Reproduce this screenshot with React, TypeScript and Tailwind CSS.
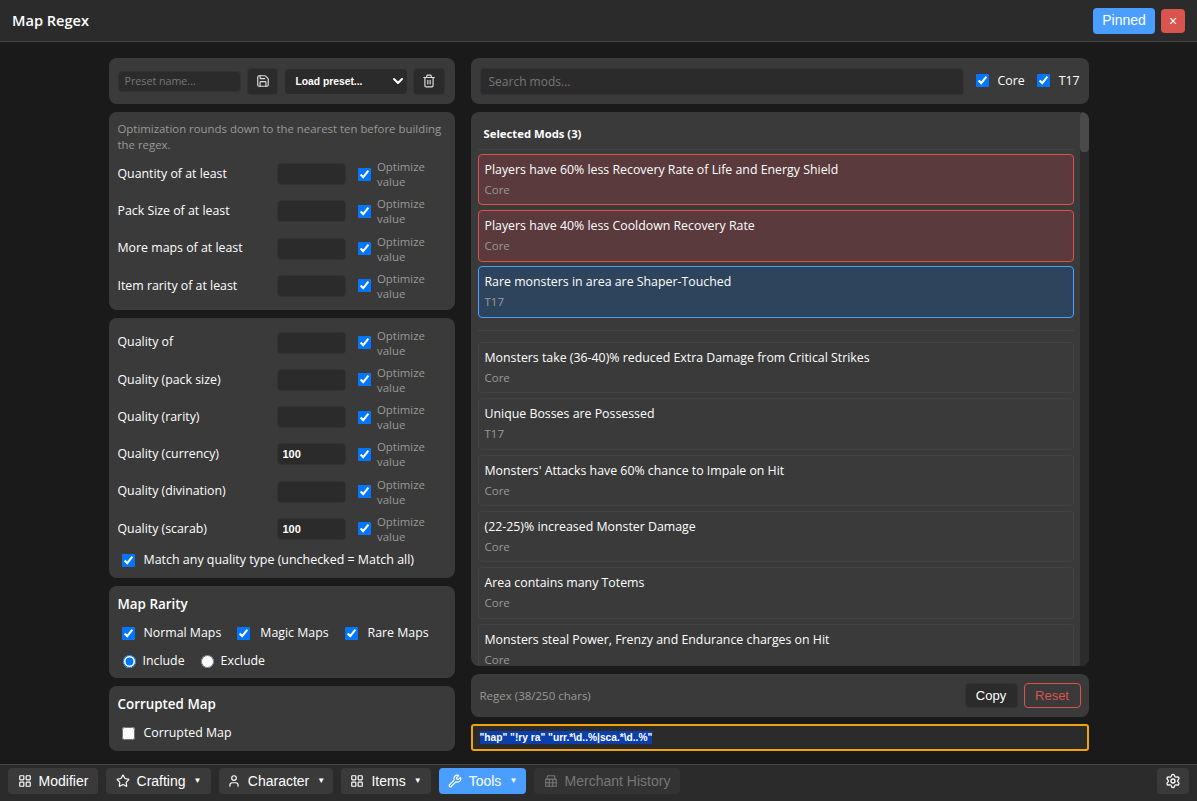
import { ChevronDown, LayoutGrid, Save, Settings, Star, Trash2, User, Wrench } from "lucide-react";

const goals = ["Quantity of at least", "Pack Size of at least", "More maps of at least", "Item rarity of at least"];

const qualities = [
  { label: "Quality of", value: "" },
  { label: "Quality (pack size)", value: "" },
  { label: "Quality (rarity)", value: "" },
  { label: "Quality (currency)", value: "100" },
  { label: "Quality (divination)", value: "" },
  { label: "Quality (scarab)", value: "100" },
];

const selectedMods = [
  { text: "Players have 60% less Recovery Rate of Life and Energy Shield", tag: "Core", tone: "border-[#d9534f] bg-[#5a3a3c]" },
  { text: "Players have 40% less Cooldown Recovery Rate", tag: "Core", tone: "border-[#d9534f] bg-[#5a3a3c]" },
  { text: "Rare monsters in area are Shaper-Touched", tag: "T17", tone: "border-[#4a9eff] bg-[#2e445c]" },
];

const mods = [
  { text: "Monsters take (36-40)% reduced Extra Damage from Critical Strikes", tag: "Core" },
  { text: "Unique Bosses are Possessed", tag: "T17" },
  { text: "Monsters' Attacks have 60% chance to Impale on Hit", tag: "Core" },
  { text: "(22-25)% increased Monster Damage", tag: "Core" },
  { text: "Area contains many Totems", tag: "Core" },
  { text: "Monsters steal Power, Frenzy and Endurance charges on Hit", tag: "Core" },
];

const navItems = [
  { label: "Modifier", icon: LayoutGrid, menu: false, width: "w-[90px]" },
  { label: "Crafting", icon: Star, menu: true, width: "w-[105px]" },
  { label: "Character", icon: User, menu: true, width: "w-[114px]" },
  { label: "Items", icon: LayoutGrid, menu: true, width: "w-[90px]" },
];

function Check({ checked = true }: { checked?: boolean }) {
  return <input type="checkbox" defaultChecked={checked} className="m-0 h-[13px] w-[13px] shrink-0" />;
}

function MerchantIcon() {
  return (
    <svg width="14" height="14" viewBox="0 0 24 24" fill="none" stroke="currentColor" strokeWidth="2" strokeLinejoin="round">
      <path d="M6 3h12l1 6H5z" />
      <rect x="3" y="9" width="18" height="12" />
      <path d="M3 15h18M9 9v12M15 9v12" />
    </svg>
  );
}

function NumberRow({ label, value }: { label: string; value: string }) {
  return (
    <div className="flex h-[30px] items-center">
      <span className="w-[159px] shrink-0 text-[12.35px] text-white">{label}</span>
      <input
        defaultValue={value}
        className="h-[22px] w-[69px] rounded-[4px] border border-[#333] bg-[#2b2b2b] px-[5px] font-['Liberation_Sans',sans-serif] text-[11px] font-bold text-white outline-none"
      />
      <span className="ml-[12px] flex items-center">
        <Check />
        <span className="ml-[6.5px] w-[60px] text-[11.4px] leading-[15px] text-[#999]">Optimize value</span>
      </span>
    </div>
  );
}

function ModRow({ text, tag, className }: { text: string; tag: string; className: string }) {
  return (
    <div className={`flex h-[51.4px] shrink-0 flex-col rounded-[4px] border px-[6px] pt-[5px] ${className}`}>
      <span className="text-[12.35px] leading-[20px] text-white">{text}</span>
      <span className="text-[11.5px] leading-[19px] text-[#999]">{tag}</span>
    </div>
  );
}

export default function App() {
  return (
    <div className="flex h-[801px] flex-col overflow-hidden bg-[#1a1a1a] font-['Open_Sans',sans-serif]">
      {/* Title bar */}
      <header className="flex h-[42px] shrink-0 items-center justify-between border-b border-[#444] bg-[#2b2b2b] pl-3 pr-[12px]">
        <h1 className="text-[14.6px] font-semibold text-white">Map Regex</h1>
        <div className="flex items-center gap-[6px]">
          <button className="h-[26px] w-[62px] rounded-[4px] bg-[#4a9eff] font-['Liberation_Sans',sans-serif] text-[14px] text-white">Pinned</button>
          <button className="h-[24px] w-[24px] rounded-[4px] bg-[#d9534f] font-['Liberation_Sans',sans-serif] text-[14px] leading-none text-white">×</button>
        </div>
      </header>

      {/* Main content */}
      <main className="mx-auto flex h-[722px] w-[980px] gap-4 pt-4">
        {/* Left column */}
        <div className="flex w-[346px] shrink-0 flex-col gap-2">
          <div className="flex h-[46px] items-center gap-[6.5px] rounded-lg bg-[#3a3a3a] px-[9px]">
            <input
              placeholder="Preset name..."
              className="h-[21px] w-[123px] rounded-[4px] border border-[#333] bg-[#2b2b2b] px-[6px] text-[10.7px] text-white outline-none placeholder:text-[#777]"
            />
            <button className="flex h-[27px] w-[31px] items-center justify-center rounded-[4px] border border-[#333] bg-[#2b2b2b] text-[#ddd]">
              <Save size={14} />
            </button>
            <div className="flex h-[25px] w-[122px] items-center justify-between rounded-[4px] bg-[#2b2b2b] pl-[11px] pr-[1px] font-['Liberation_Sans',sans-serif] text-[10.3px] font-bold text-white">
              <span className="pt-[1px]">Load preset...</span>
              <ChevronDown size={16} strokeWidth={3} />
            </div>
            <button className="flex h-[27px] w-[32px] items-center justify-center rounded-[4px] border border-[#333] bg-[#2b2b2b] text-[#ddd]">
              <Trash2 size={14} />
            </button>
          </div>

          <section className="flex h-[198px] flex-col rounded-lg bg-[#3a3a3a] px-[9px] pt-[9px]">
            <p className="mb-[6px] text-[11.4px] leading-[16px] text-[#999]">Optimization rounds down to the nearest ten before building the regex.</p>
            <div className="flex flex-col gap-[7.3px]">
              {goals.map((label) => (
                <NumberRow key={label} label={label} value="" />
              ))}
            </div>
          </section>

          <section className="flex h-[260px] flex-col rounded-lg bg-[#3a3a3a] px-[9px] pt-[9.5px]">
            <div className="flex flex-col gap-[7.3px]">
              {qualities.map((q) => (
                <NumberRow key={q.label} label={q.label} value={q.value} />
              ))}
            </div>
            <label className="mt-[7.5px] flex items-center gap-[9px] pl-[4px] text-[12.45px] text-white">
              <Check />
              Match any quality type (unchecked = Match all)
            </label>
          </section>

          <section className="flex h-[92px] flex-col rounded-lg bg-[#3a3a3a] px-[9px] pt-[8px]">
            <h3 className="text-[13.4px] font-semibold leading-[20px] text-white">Map Rarity</h3>
            <div className="mt-[10px] flex items-center pl-[4px] text-[12.35px] text-white">
              <label className="flex items-center gap-[9px]"><Check />Normal Maps</label>
              <label className="ml-[16px] flex items-center gap-[10px]"><Check />Magic Maps</label>
              <label className="ml-[16px] flex items-center gap-[10px]"><Check />Rare Maps</label>
            </div>
            <div className="mt-[9px] flex items-center pl-[5px] text-[12.35px] text-white">
              <label className="flex items-center gap-[7px]"><input type="radio" name="mode" defaultChecked className="m-0 mt-[2px]" />Include</label>
              <label className="ml-[16px] flex items-center gap-[7px]"><input type="radio" name="mode" className="m-0 mt-[2px]" />Exclude</label>
            </div>
          </section>

          <section className="flex h-[65px] flex-col rounded-lg bg-[#3a3a3a] px-[9px] pt-[8px]">
            <h3 className="text-[13.4px] font-semibold leading-[20px] text-white">Corrupted Map</h3>
            <label className="mt-[10px] flex items-center gap-[9px] pl-[4px] text-[12.35px] text-white">
              <Check checked={false} />
              Corrupted Map
            </label>
          </section>
        </div>

        {/* Right column */}
        <div className="flex w-[618px] shrink-0 flex-col gap-2">
          <div className="flex h-[46px] items-center justify-between rounded-lg bg-[#3a3a3a] pl-[9px] pr-[9px]">
            <input
              placeholder="Search mods..."
              className="h-[27px] w-[484px] shrink-0 rounded-[4px] border border-[#333] bg-[#2b2b2b] px-2 text-[12px] text-white outline-none placeholder:text-[#777]"
            />
            <label className="ml-[12px] flex items-center gap-[9px] text-[12.35px] text-white"><Check />Core</label>
            <label className="ml-[12px] flex items-center gap-[9px] text-[12.35px] text-white"><Check />T17</label>
          </div>

          <section className="flex h-[554px] overflow-hidden rounded-lg bg-[#3a3a3a]">
            <div className="flex min-w-0 flex-1 flex-col overflow-hidden pl-[7px] pr-[6px]">
              <div className="flex h-[38px] shrink-0 items-center border-b border-[#444] pl-[6px] pt-[8px] text-[11.3px] font-bold text-white">Selected Mods (3)</div>
              <div className="mt-[4px] flex flex-col gap-[4.8px]">
                {selectedMods.map((mod) => (
                  <ModRow key={mod.text} text={mod.text} tag={mod.tag} className={mod.tone} />
                ))}
              </div>
              <div className="mb-[11px] mt-[12px] shrink-0 border-b border-[#444]" />
              <div className="flex flex-col gap-[5px]">
                {mods.map((mod) => (
                  <ModRow key={mod.text} text={mod.text} tag={mod.tag} className="border-[#444]" />
                ))}
              </div>
            </div>
            <div className="w-[9px] shrink-0 bg-[#2b2b2b]">
              <div className="h-[40px] rounded-[4px] bg-[#4a4a4a]" />
            </div>
          </section>

          <div className="flex h-[43px] items-center justify-between rounded-lg bg-[#3a3a3a] pl-[9px] pr-[8px]">
            <span className="text-[11.5px] text-[#999]">Regex (38/250 chars)</span>
            <div className="flex items-center gap-[6px]">
              <button className="h-[25px] w-[53px] rounded-[4px] border border-[#333] bg-[#2b2b2b] font-['Liberation_Sans',sans-serif] text-[13px] text-white">Copy</button>
              <button className="h-[25px] w-[57px] rounded-[4px] border border-[#d9534f] font-['Liberation_Sans',sans-serif] text-[13px] text-[#d9534f]">Reset</button>
            </div>
          </div>

          <div className="-mt-[1px] flex h-[27px] items-center rounded-[3px] border-2 border-[#f0a30a] bg-[#2b2b2b] px-[7px] font-['Liberation_Sans',sans-serif] text-[10.2px] font-bold leading-[13px] text-white">
            <span className="bg-[#0b3fae]">"hap" "!ry ra" "urr.*\d..%|sca.*\d..%"</span>
          </div>
        </div>
      </main>

      {/* Bottom nav */}
      <nav className="flex h-[37px] shrink-0 items-start justify-between border-t border-[#444] bg-[#2b2b2b] pl-2 pr-[8px] pt-[3px] font-['Liberation_Sans',sans-serif] text-[14px]">
        <div className="flex items-center gap-2">
          {navItems.map((item) => (
            <button key={item.label} className={`flex h-[26px] items-center justify-center gap-[7px] rounded-[4px] bg-[#3a3a3a] text-white ${item.width}`}>
              <item.icon size={14} />
              {item.label}
              {item.menu && <span className="ml-[1px] text-[8px]">▼</span>}
            </button>
          ))}
          <button className="flex h-[26px] w-[87px] items-center justify-center gap-[7px] rounded-[4px] bg-[#4a9eff] text-white">
            <Wrench size={14} />
            Tools
            <span className="ml-[1px] text-[8px]">▼</span>
          </button>
          <button className="flex h-[26px] w-[146px] items-center justify-center gap-[7px] rounded-[4px] bg-[#333] text-[#777]">
            <MerchantIcon />
            Merchant History
          </button>
        </div>
        <button className="flex h-[26px] w-[32px] items-center justify-center rounded-[4px] bg-[#3a3a3a] text-white">
          <Settings size={16} />
        </button>
      </nav>
    </div>
  );
}
